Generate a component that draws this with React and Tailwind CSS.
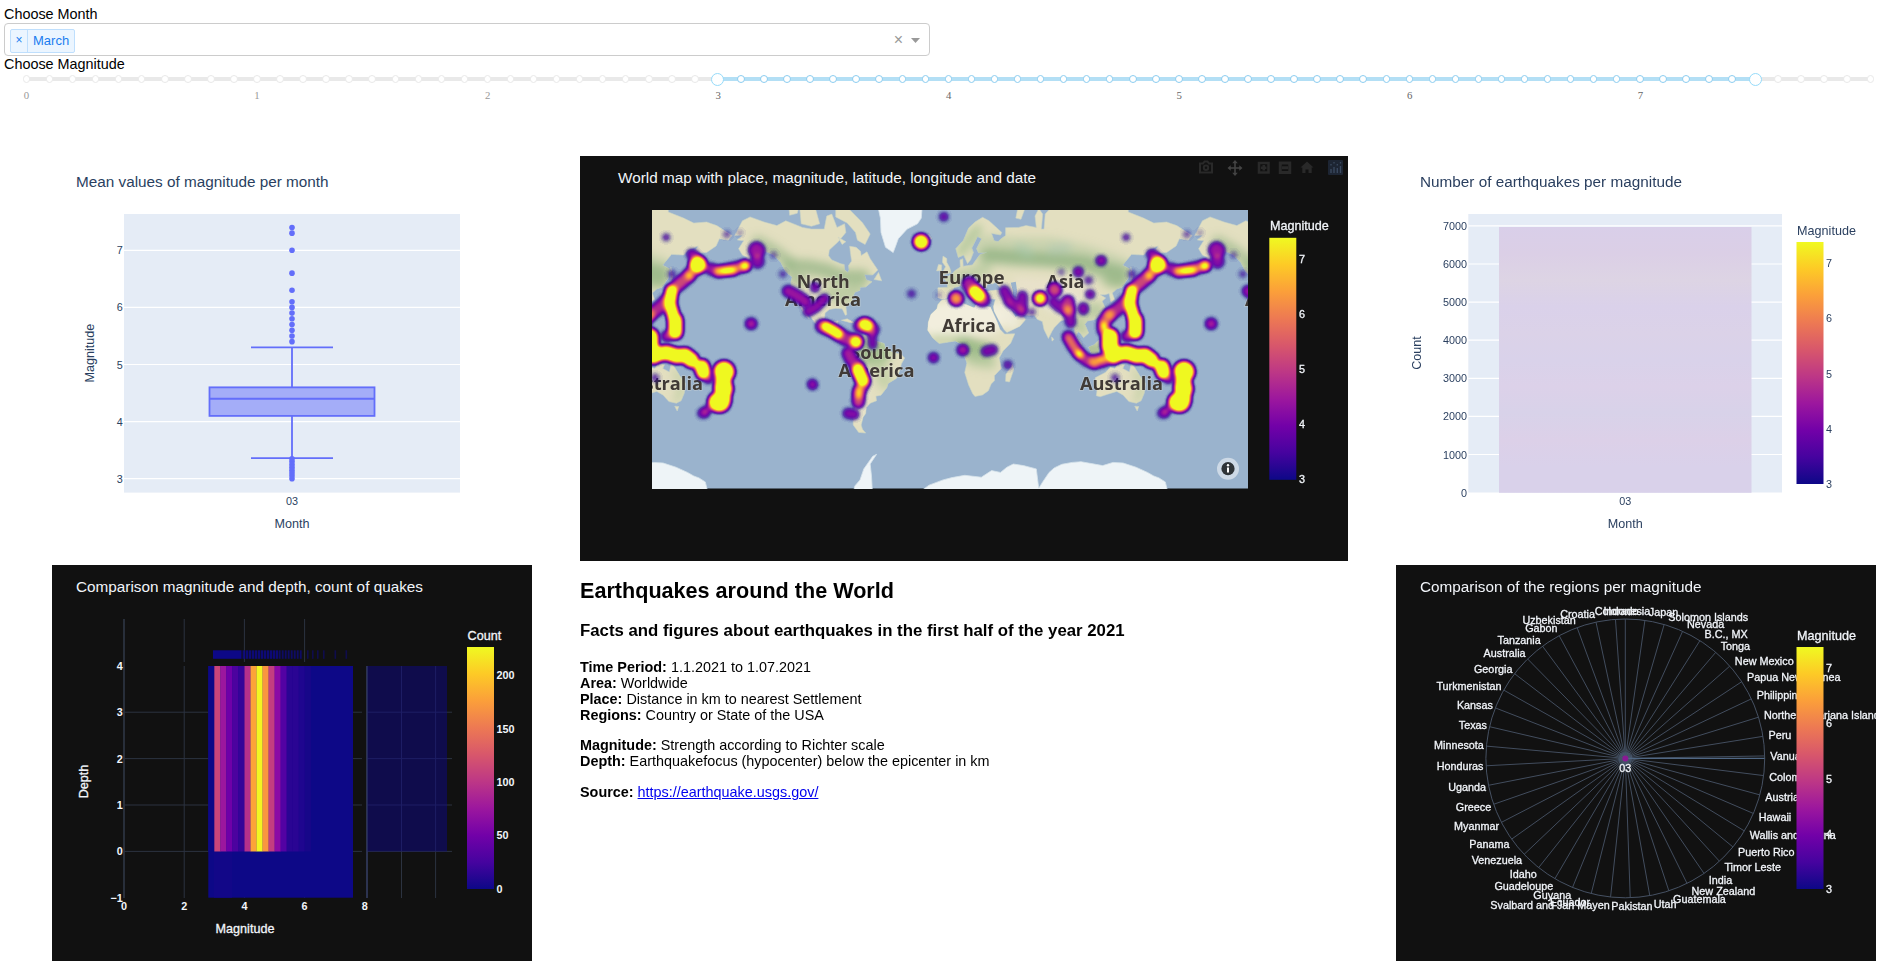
import React from "react";

const FONT = "font-['Liberation_Sans',Arial,sans-serif]";
const PLASMA = ["#0d0887", "#46039f", "#7201a8", "#9c179e", "#bd3786", "#d8576b", "#ed7953", "#fb9f3a", "#fdca26", "#f0f921"];
const LIGHT = "#f2f5fa";

/* ---------- shared chart parts ---------- */

function Label({ x, y, size = 10.8, fill = "#2a3f5f", anchor = "start", weight, rotate, children }) {
  const heavier = fill === LIGHT && !weight && size < 15;
  return (
    <text
      x={x}
      y={y}
      fontSize={size}
      fill={fill}
      stroke={heavier ? fill : "none"}
      strokeWidth={heavier ? 0.3 : 0}
      textAnchor={anchor}
      fontWeight={weight}
      transform={rotate ? `rotate(-90 ${x} ${y})` : undefined}
    >
      {children}
    </text>
  );
}

function ColorBar({ id, x, y, title, ticks, fill, weight }) {
  return (
    <g>
      <defs>
        <linearGradient id={id} x1="0" y1="1" x2="0" y2="0">
          {PLASMA.map((c, i) => (
            <stop key={c} offset={i / 9} stopColor={c} />
          ))}
        </linearGradient>
      </defs>
      <rect x={x} y={y} width="27" height="242" fill={`url(#${id})`} />
      <Label x={x + 0.6} y={y - 7.4} size={12.6} fill={fill}>{title}</Label>
      {ticks.map(([label, ty]) => (
        <Label key={label} x={x + 29.6} y={y + ty + 3.5} fill={fill} weight={weight}>{label}</Label>
      ))}
    </g>
  );
}

const MAG_TICKS = [["7", 21.5], ["6", 76.5], ["5", 132], ["4", 187], ["3", 242]];

/* ---------- header controls ---------- */

function MonthSelect() {
  return (
    <div className="flex h-[33px] w-[926px] items-center rounded-[4px] border border-[#ccc] bg-white pl-[5px] pr-[9px]">
      <div className="mt-[2px] flex h-[24px] items-center rounded-[2px] border border-[#bfdffd] bg-[#ebf5ff] text-[13px] text-[#1a7df0]">
        <span className="flex h-full w-[17px] items-center justify-center border-r border-[#bfdffd] pb-[2px] text-[12px]">×</span>
        <span className="px-[5px]">March</span>
      </div>
      <span className="ml-auto pt-[1px] text-[16px] text-[#999]">×</span>
      <svg className="ml-[8px] mt-[1px]" width="9" height="5" viewBox="0 0 9 5">
        <path d="M0 0h9L4.5 5z" fill="#999" />
      </svg>
    </div>
  );
}

function MagnitudeSlider() {
  const dots = Array.from({ length: 81 }, (_, i) => i);
  return (
    <div className="ml-[22.5px] w-[1844.5px] pt-[1px]">
      <div className="relative flex h-[14px] items-center justify-between">
        <div className="absolute inset-x-0 top-[5px] h-[4px] rounded bg-[#e9e9e9]" />
        <div className="absolute left-[37.5%] top-[5px] h-[4px] w-[56.25%] bg-[#b3dff5]" />
        {dots.map((i) => {
          const on = i >= 30 && i <= 75;
          const handle = i === 30 || i === 75;
          return (
            <span key={i} className="relative flex w-0 justify-center">
              <span
                className={
                  handle
                    ? "size-[13px] shrink-0 rounded-full border-[1.5px] border-[#96dbfa] bg-white"
                    : on
                    ? "size-[7.5px] shrink-0 rounded-full border-[1.5px] border-[#8ccdf0] bg-white"
                    : "size-[7.5px] shrink-0 rounded-full border-[1.5px] border-[#e9e9e9] bg-white"
                }
              />
            </span>
          );
        })}
      </div>
      <div className="flex pt-[2px] font-['Liberation_Serif',serif] text-[10.8px] leading-[14px]">
        {[0, 1, 2, 3, 4, 5, 6, 7].map((n) => (
          <span key={n} className={n > 2 ? "w-[230.56px] text-[#666]" : "w-[230.56px] text-[#999]"}>
            <span className="flex w-0 justify-center">{n}</span>
          </span>
        ))}
      </div>
    </div>
  );
}

/* ---------- box plot ---------- */

function BoxPlot() {
  const y = (v) => 478.7 - (v - 3) * 57.1;
  const high = [7.4, 7.3, 7, 6.6, 6.3, 6.1, 6, 5.9, 5.8, 5.7, 5.6, 5.5, 5.4];
  const low = [3.35, 3.3, 3.25, 3.2, 3.15, 3.1, 3.05, 3];
  return (
    <svg className={`block ${FONT}`} width="480" height="405" viewBox="52 160 480 405">
      <Label x={76} y={187} size={15.3}>Mean values of magnitude per month</Label>
      <rect x="124" y="214" width="336" height="278.6" fill="#e5ecf6" />
      {[3, 4, 5, 6, 7].map((v) => (
        <g key={v}>
          <path d={`M124 ${y(v)}H460`} stroke="#fff" strokeWidth="1.2" />
          <Label x={122.8} y={y(v) + 4} anchor="end">{v}</Label>
        </g>
      ))}
      <g stroke="#636efa" strokeWidth="1.8" fill="none">
        <rect x="209.5" y={y(4.6)} width="165" height={y(4.1) - y(4.6)} fill="#636efa" fillOpacity="0.5" />
        <path d={`M209.5 ${y(4.4)}H374.5M292 ${y(4.6)}V${y(5.3)}M292 ${y(4.1)}V${y(3.36)}M251 ${y(5.3)}H333M251 ${y(3.36)}H333`} />
      </g>
      {[...high, ...low].map((v) => (
        <circle key={v} cx="292" cy={y(v)} r="2.8" fill="#636efa" />
      ))}
      <Label x={292} y={504.6} anchor="middle">03</Label>
      <Label x={292} y={528.2} size={12.6} anchor="middle">Month</Label>
      <Label x={94.5} y={353.2} size={12.6} anchor="middle" rotate>Magnitude</Label>
    </svg>
  );
}

/* ---------- stacked count bar ---------- */

function CountBar() {
  const y = (v) => 492.6 - (v / 1000) * 38.1;
  const stops = ["#d9cfe9", "#dbcfe6", "#ddd4e4", "#dad1ea", "#dbd2e8", "#d9d2ea", "#dcd1e9", "#d8d2e9", "#dcd0e8", "#d9d1ea", "#d9d1ea"];
  return (
    <svg className={`block overflow-visible ${FONT}`} width="480" height="405" viewBox="1396 160 480 405">
      <defs>
        <linearGradient id="stack" x1="0" y1="0" x2="0" y2="1">
          {stops.map((c, i) => (
            <stop key={i} offset={i / (stops.length - 1)} stopColor={c} />
          ))}
        </linearGradient>
      </defs>
      <Label x={1420} y={187} size={15.3}>Number of earthquakes per magnitude</Label>
      <rect x="1468.3" y="214" width="313.7" height="278.5" fill="#e5ecf6" />
      {[0, 1000, 2000, 3000, 4000, 5000, 6000, 7000].map((v) => (
        <g key={v}>
          {v > 0 && <path d={`M1468.3 ${y(v)}H1782`} stroke="#fff" strokeWidth="1.2" />}
          <Label x={1467} y={y(v) + 4} anchor="end">{v}</Label>
        </g>
      ))}
      <rect x="1499" y="227" width="252.5" height="265.8" fill="url(#stack)" />
      <Label x={1625.3} y={504.6} anchor="middle">03</Label>
      <Label x={1625.3} y={528.2} size={12.6} anchor="middle">Month</Label>
      <Label x={1420.5} y={353} size={12.6} anchor="middle" rotate>Count</Label>
      <ColorBar id="bar-scale" x={1796.5} y={242} title="Magnitude" ticks={MAG_TICKS} fill="#2a3f5f" />
    </svg>
  );
}

/* ---------- depth heat map ---------- */

const BINS = [
  "#0d0887", "#ca457a", "#9c179e", "#6f00a8", "#4c029f", "#350498", "#b5308b", "#fca338", "#f2f522", "#f9963f",
  "#c33d80", "#8b0aa5", "#5302a3", "#2a0593", "#2a0593", "#1f068f", "#170789",
];
const RUG = [307, 312, 317, 323, 334.5, 345.5];

function DepthHeatMap() {
  const x = (v) => 124 + v * 30.1;
  const y = (v) => 851.4 - v * 46.4;
  const grid = "#2c3340";
  return (
    <svg className={`block bg-[#111] ${FONT}`} width="480" height="405" viewBox="52 565 480 405">
      <Label x={76} y={591.7} size={15.3} fill={LIGHT}>Comparison magnitude and depth, count of quakes</Label>
      <g stroke={grid} strokeWidth="1">
        {[2, 4, 6].map((v) => (
          <path key={v} d={`M${x(v)} 619V662M${x(v)} 666V898`} />
        ))}
        {[0, 1, 2, 3].map((v) => (
          <path key={v} d={`M124 ${y(v)}H362M367 ${y(v)}H452`} />
        ))}
        <path d="M401.5 666V898M435.6 666V898" />
        <path d="M124 619V898" strokeWidth="1.8" />
        <path d="M367 666V898" strokeWidth="1.8" stroke="#303858" />
      </g>
      <rect x="367.5" y="666" width="79.5" height="185.5" fill="#0d0887" fillOpacity="0.5" />
      <rect x="208.3" y="666" width="144.7" height="231.700" fill="#0d0887" />
      <rect x="214" y="852" width="18" height="45.700" fill="#120788" />
      {BINS.map((c, i) => (
        <rect key={i} x={208.3 + i * 6.03} y="666" width="6.2" height="185.5" fill={c} />
      ))}
      <g fill="#0d0887">
        <rect x="213" y="650.3" width="28.5" height="8.500" />
        {Array.from({ length: 20 }, (_, i) => (
          <rect key={i} x={242.6 + i * 3.01} y="650.3" width={i < 12 ? 2.4 : 1.9} height="8.5" opacity={i < 12 ? 0.85 : 0.7} />
        ))}
        {RUG.map((r) => (
          <rect key={r} x={r} y="650.3" width="1.6" height="8.5" opacity="0.5" />
        ))}
      </g>
      {[-1, 0, 1, 2, 3, 4].map((v) => (
        <Label key={v} x={122.8} y={y(v) + 4} fill={LIGHT} weight={700} anchor="end">{v < 0 ? "−1" : v}</Label>
      ))}
      {[0, 2, 4, 6, 8].map((v) => (
        <Label key={v} x={x(v)} y={909.6} fill={LIGHT} weight={700} anchor="middle">{v}</Label>
      ))}
      <Label x={245} y={933.2} size={12.6} fill={LIGHT} anchor="middle">Magnitude</Label>
      <Label x={87.5} y={781.5} size={12.6} fill={LIGHT} anchor="middle" rotate>Depth</Label>
      <ColorBar
        id="depth-scale"
        x={467}
        y={647}
        title="Count"
        weight={700}
        ticks={[["200", 28], ["150", 82], ["100", 135], ["50", 188.5], ["0", 242]]}
        fill={LIGHT}
      />
    </svg>
  );
}

/* ---------- polar chart ---------- */

const REGIONS = [
  "Indonesia", "Japan", "Solomon Islands", "Nevada", "B.C., MX", "Tonga", "New Mexico", "Papua New Guinea", "Philippines",
  "Northern Mariana Islands", "Peru", "Vanuatu", "Colombia", "Austria", "Hawaii", "Wallis and Futuna", "Puerto Rico",
  "Timor Leste", "India", "New Zealand", "Guatemala", "Utah", "Pakistan", "Svalbard and Jan Mayen", "Ecuador", "Guyana",
  "Guadeloupe", "Idaho", "Venezuela", "Panama", "Myanmar", "Greece", "Uganda", "Honduras", "Minnesota", "Texas", "Kansas",
  "Turkmenistan", "Georgia", "Australia", "Tanzania", "Gabon", "Uzbekistan", "Croatia", "Colorado",
];

function RegionPolar() {
  const cx = 1625.3;
  const cy = 758.4;
  const r = 139.4;
  const middle = ["Indonesia", "Pakistan", "Colorado"];
  return (
    <svg className={`block bg-[#111] ${FONT}`} width="480" height="405" viewBox="1396 565 480 405">
      <Label x={1420} y={591.7} size={15.3} fill={LIGHT}>Comparison of the regions per magnitude</Label>
      <circle cx={cx} cy={cy} r={r} fill="none" stroke="#465163" strokeWidth="1" />
      {REGIONS.map((name, i) => {
        const a = ((90 - i * 8.0899) * Math.PI) / 180;
        const c = Math.cos(a);
        const s = Math.sin(a);
        const mid = middle.includes(name);
        const right = c > 0;
        const lx = mid ? cx + (r + 6) * c + 1.5 : right ? cx + r * c + 3.6 + 2 * c : cx + r * c - 0.6 + 2 * c;
        return (
          <g key={name}>
            <path d={`M${cx} ${cy}L${cx + r * c} ${cy - r * s}`} stroke="#424d5e" strokeWidth="1" />
            <Label x={lx} y={cy - 147.6 * s + 4} fill={LIGHT} anchor={mid ? "middle" : right ? "start" : "end"}>
              {name}
            </Label>
          </g>
        );
      })}
      <path d={`M${cx} ${cy}H${cx + r}`} stroke="#506784" strokeWidth="1.2" />
      <circle cx={cx} cy={cy} r="7" fill="#506784" opacity="0.35" />
      <circle cx={cx} cy={cy} r="3" fill="#8a1a94" />
      <Label x={cx} y={771.8} fill={LIGHT} anchor="middle">03</Label>
      <ColorBar id="polar-scale" x={1796.5} y={647} title="Magnitude" ticks={MAG_TICKS} fill={LIGHT} />
    </svg>
  );
}

/* ---------- world map ---------- */

const px = (lon) => 949.4 + lon * 1.2778;
const py = (lat) => 349 - 73.21 * Math.log(Math.tan(Math.PI / 4 + (lat * Math.PI) / 360));
const line = (pts) => {
  const out = [];
  for (let i = 0; i < pts.length; i += 2) out.push(`${px(pts[i]).toFixed(1)} ${py(pts[i + 1]).toFixed(1)}`);
  return "M" + out.join("L");
};

const LAND = [
  // North America
  [-168, 66, -162, 70.3, -156, 71.3, -145, 70, -135, 69, -128, 70.3, -115, 68.5, -108, 68, -98, 68, -96, 71.5, -92, 72, -88, 68.5, -82, 69.5, -81, 67, -87, 64, -94, 61, -94.5, 58.7, -92, 57, -85, 55.3, -82.3, 55, -82, 52.5, -79.5, 51.3, -78.5, 52.5, -79, 54.5, -76.5, 56.5, -77.5, 60, -78, 62.4, -73, 62, -69.5, 60.5, -69, 58.8, -64.5, 60.3, -62, 57.5, -56, 52.5, -60, 50, -66.5, 50.2, -65, 47.5, -60.5, 46.5, -65.5, 43.6, -70, 43.5, -70, 41.7, -74, 40.5, -76, 37, -75.8, 35.3, -81, 31.5, -80.2, 26, -81.5, 25.5, -82.8, 28, -84, 30, -89.5, 30.2, -94, 29.5, -97.3, 27, -97.8, 22.3, -95, 18.7, -91, 18.8, -90.3, 21, -87, 21.4, -88.3, 16, -84, 15.8, -83.5, 11, -80, 9.2, -77.4, 8.5, -80, 7.4, -83.5, 8.6, -87.5, 13, -94, 16, -101, 17.5, -105.5, 20.3, -109.3, 25.6, -112.8, 30.5, -114.7, 31.3, -112, 27.5, -109.7, 23, -112.2, 25, -115, 28.5, -117.2, 32.8, -120.6, 34.7, -124, 39.5, -124, 46.5, -123, 49, -128, 51.5, -132, 56, -138, 59.2, -146, 60.8, -152, 59.8, -156, 57.5, -164, 54.8, -158, 58, -162, 59, -165, 61.5, -161, 64.3, -166, 64.6, -162, 66],
  [-89, 74, -78, 73, -68, 69.8, -62, 66.5, -66, 63, -72, 64.5, -73.5, 67, -80, 69.7, -89, 71.3],
  [-117, 73, -105, 73.5, -101.5, 69.5, -108, 68.8, -116, 69.5],
  [-126, 74.5, -125, 71.7, -119, 72.2, -117, 74.5],
  [-87, 65.5, -81, 64, -84, 63],
  [-59, 47.7, -53, 47, -55.5, 51.3],
  [-84.5, 22, -77, 20, -74.5, 20.2, -80, 23],
  [-74, 18.4, -68.5, 18.4, -70, 19.8, -73, 19.8],
  // Iceland
  [-24, 65.5, -22, 64, -18.5, 63.4, -13.8, 65, -16, 66.4, -21, 66],
  // South America
  [-77.4, 8.5, -75, 11, -71.7, 12.3, -71, 11, -64, 10.5, -61, 9, -57, 6, -51, 4.3, -50, 0, -44.5, -2.5, -38, -4, -35, -7, -37.5, -11.5, -39, -17, -41.5, -22.5, -48, -26, -49, -29, -53.5, -34, -57.5, -34.6, -57, -37.5, -62, -39, -65, -41.5, -65.5, -45, -67.5, -47, -69, -51, -68, -53, -65.5, -54.8, -71, -54.5, -75.3, -51, -75.3, -46.5, -73.5, -41, -73.5, -37, -71.5, -31, -70.3, -22, -70.5, -18.3, -76, -14, -79, -8, -81.2, -5, -80, -2.5, -80, 1, -77.3, 4],
  // Africa
  [-6, 35.8, 3, 36.9, 10.5, 37.3, 11, 33.6, 19.5, 30.5, 21, 32.8, 32, 31.2, 34, 27.5, 37.3, 20.8, 39.5, 15.2, 43.2, 11.6, 51.2, 11.8, 48, 4.5, 42, -1.5, 39, -7, 40.6, -15, 35.2, -20.5, 35.4, -24, 32.7, -26.5, 30.5, -31, 26, -33.8, 20, -34.8, 18.2, -33, 15, -27, 12, -18, 13.7, -11, 12, -5.5, 9, -1, 9.5, 4, 4.5, 6.3, -3, 5, -8, 4.3, -13, 8.5, -17, 14.5, -16.5, 20.5, -14.5, 26, -9.8, 30, -9, 32.8],
  [49.3, -12, 50.3, -16, 47, -25, 44, -24.5, 44.2, -19.5],
  // Europe and Asia
  [-9, 43.2, -1.5, 43.4, -1.3, 46, -4.7, 48.4, 1.5, 50, 4, 52, 8.5, 53.8, 8.3, 57, 10.5, 57.5, 10.8, 54.2, 18, 54.8, 21.5, 57.5, 24, 59.3, 29.8, 60, 22.8, 59.9, 21.3, 61.5, 25.3, 65, 22, 65.7, 17.5, 61.8, 18.8, 60, 16.5, 57, 14.2, 55.4, 11.2, 59, 7, 58, 5, 61.5, 11, 64.5, 15, 68.3, 20, 70, 26, 71.2, 31, 70.3, 41, 67, 40, 66.2, 33, 66.7, 35, 64.3, 38, 64, 40.5, 65, 44, 66, 44, 68.4, 54, 68.5, 60, 69, 68, 68.5, 67, 71.5, 70, 73.3, 73, 72, 72, 68, 74, 68, 75, 72, 80, 73.7, 140, 73.7, 140, 72.5, 152, 71, 160, 69.7, 170, 70, 178, 69, 190, 66, 187, 64.5, 180, 65, 177.5, 62.5, 170, 60, 163.5, 59.8, 162.5, 56.2, 156.7, 51, 155.8, 56.5, 163.5, 62.5, 156, 61, 152, 59, 142.5, 59.3, 135.5, 54.7, 141, 53, 140, 48.5, 135, 43.5, 131, 42.5, 127.5, 40, 129.4, 36, 126.4, 34.5, 125, 39.7, 121.5, 39, 118, 39, 122.3, 37, 119.5, 35, 121.8, 31, 119, 25.5, 113.5, 22.3, 108, 21.5, 106, 19, 109, 12.5, 105, 8.8, 102.5, 12.3, 100.5, 13.5, 99.3, 10, 103.3, 4.5, 104, 1.3, 100.7, 4, 98.5, 8.5, 97.5, 16.5, 94.5, 16, 91.8, 22.5, 87, 21.3, 82.2, 16.7, 80.2, 13.5, 77.5, 8.2, 74, 15, 72.7, 21, 69, 22.5, 66.5, 25.3, 57.3, 25.8, 51.5, 27.9, 48, 30, 50.5, 26, 51.7, 24.2, 56.2, 26.2, 59.7, 22.5, 55.2, 17.5, 45, 12.8, 42.7, 15, 39, 21.5, 35, 28.5, 34.5, 31.5, 36, 36.2, 30.7, 36.5, 27, 37.3, 26.3, 40, 30, 41.2, 36, 41.8, 41.5, 41.7, 37.5, 45, 39, 47.2, 33.5, 45.2, 30.5, 46.3, 28, 42.5, 28.5, 41.2, 23, 40.5, 24, 38, 22.5, 36.5, 19.5, 41, 13.8, 45.5, 12.5, 44, 18.3, 40, 16, 38.2, 12, 41.7, 9, 44.3, 3.2, 43, 3, 41.8, -0.5, 38.5, -2, 36.8, -5.6, 36.2, -9, 37.2],
  [-5.5, 50, 1.3, 51.2, 0.3, 53.5, -2, 56, -2, 57.6, -5, 58.6, -5.5, 56, -3, 54, -4.8, 52],
  [-10, 52, -6.2, 52.2, -6, 54.8, -8.5, 55],
  [52, 71, 56, 70.7, 60, 74, 54, 74],
  [142, 54, 143.5, 49, 142.2, 46, 142, 50],
  [140.2, 42, 143, 42, 145.3, 43.5, 141.7, 45.4],
  [130, 33.7, 130.5, 31.3, 132, 33.5, 135.5, 33.6, 139.5, 35, 140.9, 36, 141.8, 39.5, 141, 41.3, 139.5, 38.5, 136.5, 37, 132.5, 35.4],
  [120.3, 23, 121.5, 25],
  [120.3, 18.3, 122.2, 18.3, 121.7, 14.5, 125.5, 12, 126.3, 7.3, 123, 7.5, 124, 10.8, 120.5, 14],
  [109, 1.5, 113, 3.2, 117, 7, 119, 5, 117.5, 1, 116, -3.8, 111, -3.3],
  [95.5, 5.5, 98, 4, 103.5, -1, 106, -3, 105.5, -5.8, 102, -4, 98.5, 1],
  [105.5, -6.5, 108.5, -6.7, 114.4, -7.8, 114.3, -8.7, 106.5, -7.4],
  [119.5, 0.5, 125, 1.5, 121, -1, 123, -4.8, 120.5, -5.5, 119, -3],
  [131, -0.8, 134, -1, 138, -1.7, 144.5, -3.8, 148, -6.5, 150.7, -10.5, 144, -7.7, 138, -8.3, 138, -5.5, 133, -4],
  [80, 9.5, 81.8, 7.5, 80.3, 6.1],
  // Oceania
  [114, -22, 122, -18, 126, -14, 129.5, -15, 132, -11.3, 137, -12.2, 135.7, -15, 140.8, -17.6, 142.5, -10.8, 145.5, -15, 149, -20.5, 153.3, -26, 152.5, -32.5, 150, -37.5, 146.3, -39, 140.5, -38, 136, -34, 131, -31.5, 124, -33.3, 118, -35, 115, -34.3, 115.5, -31],
  [145, -40.8, 148.2, -41, 147, -43.6],
];
const ICE = [
  [-57, 75, -54, 71, -53.5, 67, -50, 62, -44, 60, -42, 62.5, -40, 65, -33, 68, -25, 69.5, -22, 71, -21, 75],
  [-76, -75, -74, -72.5, -70, -71, -67, -68, -60, -64, -57, -63.3, -62, -66.5, -61, -70, -60, -75],
  [-29, -75, -16, -72.3, -5, -71, 2, -70.4, 12, -69.8, 25, -70.3, 33, -68.5, 40, -69, 45, -67.5, 50, -66.5, 58, -67, 68, -68, 69.5, -72, 70, -73, 73, -71.5, 78, -69, 82, -67.7, 88, -66.6, 96, -66, 103, -65.8, 110, -66.3, 120, -67, 128, -66, 136, -66.2, 146, -67.5, 155, -69, 160, -70, 164, -70.5, 169, -71.5, 172, -75],
];
const LAND_PATH = LAND.map((p) => line(p) + "Z").join("");
const ICE_PATH = ICE.map((p) => line(p) + "Z").join("");

// [points, width, colour, opacity]
const TERRAIN = [
  [[-150, 64, -138, 61, -125, 56], 12, "#9cb98c", 0.7],
  [[-125, 54, -112, 54, -95, 52, -85, 49, -68, 49], 15, "#97b587", 0.75],
  [[-122, 48, -115, 46], 9, "#92b082", 0.7],
  [[-92, 40, -80, 38, -72, 44], 16, "#a9c294", 0.65],
  [[-112, 35, -103, 33], 16, "#e6e1c9", 0.8],
  [[-90, 15, -84, 11], 6, "#a9c294", 0.8],
  [[-74, 3, -64, -3, -56, -3], 26, "#9abb87", 0.85],
  [[-55, -15, -50, -25], 16, "#bccd9f", 0.7],
  [[-70, -20, -67, -32, -69, -48], 6, "#ece8d8", 0.8],
  [[9, 60, 14, 64, 22, 68], 9, "#a5c292", 0.75],
  [[0, 47, 15, 50, 28, 53], 14, "#b5ca9d", 0.75],
  [[30, 61, 55, 60, 80, 60, 105, 57, 122, 54, 135, 51], 30, "#b4c9a0", 0.55],
  [[30, 59, 55, 58, 80, 57, 105, 56, 122, 53, 135, 51], 14, "#8db180", 0.75],
  [[55, 62, 62, 60], 10, "#a9c9ae", 0.6],
  [[80, 61, 92, 62], 9, "#b3cbb2", 0.7],
  [[125, 47, 134, 46], 12, "#9bb98a", 0.8],
  [[55, 45, 70, 44, 85, 44, 105, 44], 14, "#e9e2cb", 0.95],
  [[80, 35, 98, 33], 16, "#ece9de", 0.95],
  [[105, 28, 116, 29], 16, "#b3c79c", 0.8],
  [[98, 20, 105, 15], 10, "#a9c294", 0.8],
  [[45, 24, 50, 20, 42, 30, 56, 32], 14, "#f0ecdc", 0.9],
  [[-10, 22, 10, 24, 30, 24], 34, "#f2eedd", 1],
  [[-12, 8, 5, 8, 15, 7], 8, "#bccd9f", 0.8],
  [[12, 2, 20, -1, 27, -2], 20, "#97b884", 0.9],
  [[18, -9, 32, -11], 12, "#b5c99d", 0.8],
  [[101, 0, 114, 0, 122, -1, 140, -5], 12, "#98b587", 0.8],
  [[146, -18, 151, -28, 147, -37], 6, "#b9ca9f", 0.8],
];

// [path points on the canvas, stroke width, intensity]
const QUAKES = [
  // Pacific rim, north to south
  [[630, 206, 655, 215, 735, 197], 10, 0.22],
  [[655, 214, 698, 211], 8, 0.5],
  [[672, 213, 688, 212], 5, 0.6],
  [[735, 197, 736, 197], 9, 0.62],
  [[700, 210, 735, 198], 8, 0.25],
  [[770, 150, 771, 152], 15, 0.22],
  [[772, 182, 773, 185], 12, 0.18],
  [[575, 163, 585, 168], 9, 0.2],
  [[593, 193, 594, 194], 15, 1],
  [[590, 200, 566, 228, 530, 258], 11, 0.34],
  [[567, 226, 568, 227], 7, 0.45],
  [[515, 272, 509, 310, 518, 340, 526, 370], 10, 1],
  [[526, 360, 526, 396], 12, 1],
  [[500, 408, 512, 405], 9, 0.25],
  [[500, 300, 480, 322, 448, 345], 11, 0.27],
  [[448, 345, 432, 365, 432, 390], 11, 0.33],
  [[432, 373, 432, 383], 6, 0.6],
  [[450, 410, 450, 440, 462, 466], 14.5, 1],
  [[462, 464, 500, 458, 530, 468, 556, 466, 574, 480], 12.5, 1],
  [[574, 484, 604, 506], 8, 0.45],
  [[606, 500, 610, 516], 12, 1],
  [[610, 520, 625, 535], 8, 0.25],
  [[672, 514, 673, 515], 18.5, 1],
  [[670, 520, 668, 600], 14, 1],
  [[670, 562, 671, 568], 16, 1],
  [[655, 606, 660, 606], 18, 1],
  [[607, 640, 613, 640], 9, 0.14],
  [[630, 622, 615, 635], 7, 0.18],
  // Sumatra and Java
  [[325, 410, 340, 438, 358, 462, 380, 480, 402, 488], 10, 0.27],
  [[325, 415, 350, 452], 7, 0.22],
  [[356, 460, 361, 465], 6, 0.7],
  [[402, 486, 425, 482, 455, 470], 11, 0.33],
  [[420, 478, 430, 478], 6, 0.4],
  // Asia
  [[240, 295, 241, 295], 11, 0.8],
  [[283, 268, 284, 270], 12, 0.34],
  [[280, 305, 300, 322, 320, 330], 9, 0.17],
  [[323, 305, 326, 330], 11, 0.28],
  [[326, 330, 332, 368], 9, 0.18],
  [[355, 215, 355, 216], 9, 0.18],
  [[423, 182, 424, 182], 9, 0.2],
  [[385, 241, 386, 241], 8, 0.09],
  [[390, 283, 391, 283], 8, 0.16],
  [[370, 323, 370, 329], 9, 0.18],
  [[303, 216, 304, 216], 6, 0.07],
  [[498, 112, 499, 112], 7, 0.1],
  [[516, 222, 516, 222.5], 8, 0.08],
  [[680, 103, 681, 103], 7, 0.07],
  [[720, 98, 720, 98.5], 6, 0.04],
  [[820, 165, 821, 165], 7, 0.06],
  [[465, 533, 466, 534], 8, 0.08],
  [[133, 272, 150, 305, 185, 335], 9, 0.18],
  [[147, 304, 150, 308], 8, 0.08],
  [[187, 288, 186, 325], 9, 0.17],
  [[215, 336, 216, 336], 7, 0.08],
  // Mediterranean
  [[28, 252, 42, 272, 68, 298], 13, 0.25],
  [[45, 275, 57, 287], 11, 1],
  [[-12, 295, -11, 296], 12, 0.5],
  // Africa and the oceans
  [[8, 450, 9, 450], 10, 0.23],
  [[78, 454, 98, 449], 9, 0.16],
  [[143, 494, 144, 494], 8, 0.12],
  [[753, 371, 754, 371], 10, 0.24],
  [[-80, 473, -79, 473], 9, 0.19],
  [[-49, 50, -48, 50], 8, 0.14],
  [[-146, 281, -145, 281], 8, 0.09],
  [[-65, 285, -64, 285], 7, 0.03],
  [[-443, 553, -442, 554], 9, 0.2],
  [[-117, 125, -116, 126], 13, 1],
  // Americas
  [[-516, 273, -485, 290, -463, 305], 10, 0.22],
  [[-456, 335, -432, 322, -407, 296], 8, 0.2],
  [[-435, 260, -435, 263], 8, 0.16],
  [[-532, 222, -531, 222], 7, 0.08],
  [[-413, 378, -380, 392, -345, 415, -312, 425], 12, 0.26],
  [[-403, 379, -380, 392, -365, 402], 8, 0.95],
  [[-312, 425, -312, 426], 11, 0.85],
  [[-287, 373, -278, 377], 11, 0.85],
  [[-300, 378, -280, 375, -262, 388], 12, 0.18],
  [[-264, 400, -262, 435], 7, 0.16],
  [[-335, 460, -325, 480, -306, 500], 11, 0.24],
  [[-306, 509, -292, 540], 11, 0.95],
  [[-287, 545, -303, 575, -305, 606], 10, 0.34],
  [[-303, 570, -304, 585], 7, 0.45],
  [[-336, 640, -318, 643], 9, 0.18],
];
const quakePath = (pts) => {
  const out = [];
  for (let i = 0; i < pts.length; i += 2) out.push(`${960 + pts[i] / 3} ${200 + pts[i + 1] / 3}`);
  return "M" + out.join("L");
};
const table = (from) => PLASMA.map((c) => (parseInt(c.slice(from, from + 2), 16) / 255).toFixed(3)).join(" ");

const PLACES = [
  [823.2, 287.5, "North", 53],
  [823, 306.3, "America", 76],
  [876.8, 358.5, "South", 53],
  [876.5, 377.2, "America", 76],
  [971.5, 284, "Europe", 66],
  [969, 332.3, "Africa", 54],
  [1065.5, 288, "Asia", 38],
  [1121.5, 390.2, "Australia", 83],
];

function ModeBar() {
  return (
    <g fill="none" stroke="#292929" strokeWidth="2">
      <g>
        <path d="M1200 163.500h3l1.500-2h3l1.500 2h3v9h-12z" />
        <circle cx="1206" cy="167.800" r="2.200" />
      </g>
      <g stroke="#444" strokeWidth="1.600">
        <path d="M1235 162v12M1229 168h12" />
        <path d="M1235 160l2.800 3.200h-5.600zM1235 176l2.800-3.200h-5.600zM1227.500 168l3.200-2.800v5.600zM1242.500 168l-3.200-2.800v5.600z" fill="#444" stroke="none" />
      </g>
      <path d="M1259 163h9.500v9.500h-9.500zM1263.750 165v5.500M1261 167.750h5.500" strokeWidth="2.600" />
      <path d="M1280.250 163h9.500v9.500h-9.500zM1282 167.750h6" strokeWidth="3" />
      <path d="M1307 161.500l6.500 6h-1.800v5.500h-3.200v-3.500h-3v3.500h-3.200v-5.500h-1.800z" fill="#292929" stroke="none" />
      <rect x="1328" y="160" width="15" height="15" rx="1" fill="#1d2533" stroke="none" />
      <path d="M1331 173v-4M1334 173v-6M1337.300 173v-5M1340.500 173v-7M1331 164v1.500M1334 162v1.500M1337.300 164v1.500M1340.500 162v1.500" stroke="#3b4a60" strokeWidth="1.300" />
    </g>
  );
}

function WorldMap() {
  return (
    <svg className={`block bg-[#111] ${FONT}`} width="768" height="405" viewBox="580 156 768 405">
      <defs>
        <clipPath id="frame">
          <rect x="652" y="210" width="596" height="278.5" />
        </clipPath>
        <clipPath id="land">
          <path d={LAND_PATH} />
        </clipPath>
        <filter id="soft">
          <feGaussianBlur stdDeviation="0.7" />
        </filter>
        <filter id="softer" x="-20%" y="-20%" width="140%" height="140%">
          <feGaussianBlur stdDeviation="4" />
        </filter>
        <filter id="density" filterUnits="userSpaceOnUse" x="630" y="190" width="640" height="320" colorInterpolationFilters="sRGB">
          <feGaussianBlur stdDeviation="2" />
          <feColorMatrix values="0 0 0 1.5 0  0 0 0 1.5 0  0 0 0 1.5 0  0 0 0 1.5 0" />
          <feComponentTransfer>
            <feFuncR type="table" tableValues={table(1)} />
            <feFuncG type="table" tableValues={table(3)} />
            <feFuncB type="table" tableValues={table(5)} />
            <feFuncA type="table" tableValues="0 0.7 0.95 1 1 1 1 1 1 1 1" />
          </feComponentTransfer>
        </filter>
        <g id="world">
          <g filter="url(#soft)">
            <path d={LAND_PATH} fill="#e3dfc0" stroke="#c9d3c4" strokeWidth="0.6" />
            <g clipPath="url(#land)">
              <g filter="url(#softer)" fill="none" strokeLinecap="round" strokeLinejoin="round">
                {TERRAIN.map(([pts, w, c, o], i) => (
                  <path key={i} d={line(pts)} stroke={c} strokeWidth={w} opacity={o} />
                ))}
              </g>
            </g>
            <path d={ICE_PATH} fill="#eef4f7" stroke="#d5e2ea" strokeWidth="0.8" />
            <path d={line([48, 46, 52, 46.5, 53, 41, 52, 37, 50, 38, 49.5, 42]) + "Z"} fill="#9ab3cd" />
          </g>
        </g>
        <g id="places" fontSize="18.5" fontWeight="700" textAnchor="middle" fill="#403a35" stroke="#e8e6dc" strokeOpacity="0.35" strokeWidth="1.500" style={{ paintOrder: "stroke" }}>
          {PLACES.map(([x, y, t, w]) => (
            <text key={`${t}${x}`} x={x} y={y} textLength={w} lengthAdjust="spacingAndGlyphs">{t}</text>
          ))}
        </g>
        <g id="quakes" fill="none" stroke="#fff" strokeLinecap="round" strokeLinejoin="round">
          {QUAKES.map(([pts, w, v], i) => (
            <path key={i} d={quakePath(pts)} strokeWidth={w} opacity={v} />
          ))}
        </g>
      </defs>
      <Label x={618} y={182.7} size={15.3} fill={LIGHT}>World map with place, magnitude, latitude, longitude and date</Label>
      <ModeBar />
      <g clipPath="url(#frame)">
        <rect x="652" y="210" width="596" height="279" fill="#9ab3cd" />
        <use href="#world" x="-460" />
        <use href="#world" />
        <use href="#world" x="460" />
        <g className="font-['Open_Sans',sans-serif]">
          <use href="#places" x="-460" />
          <use href="#places" />
          <use href="#places" x="460" />
        </g>
        <g filter="url(#density)">
          <use href="#quakes" x="-460" />
          <use href="#quakes" />
          <use href="#quakes" x="460" />
        </g>
        <circle cx="1228" cy="468.700" r="11" fill="#fff" fillOpacity="0.5" />
        <circle cx="1228" cy="468.700" r="6.600" fill="#2f3438" />
        <path d="M1228 467.500v5" stroke="#fff" strokeWidth="2" fill="none" />
        <circle cx="1228" cy="465.200" r="1.200" fill="#fff" />
      </g>
      <ColorBar id="map-scale" x={1269.3} y={237.8} title="Magnitude" ticks={MAG_TICKS} fill={LIGHT} />
    </svg>
  );
}

/* ---------- facts ---------- */

function Fact({ name, children }) {
  return (
    <p>
      <b>{name}:</b> {children}
    </p>
  );
}

function Facts() {
  return (
    <div className="text-[14.4px] leading-[16px] text-black">
      <h2 className="pt-[17px] text-[21.6px] font-bold leading-[25px]">Earthquakes around the World</h2>
      <h3 className="pb-[18px] pt-[18px] text-[16.8px] font-bold leading-[20px]">
        Facts and figures about earthquakes in the first half of the year 2021
      </h3>
      <Fact name="Time Period">1.1.2021 to 1.07.2021</Fact>
      <Fact name="Area">Worldwide</Fact>
      <Fact name="Place">Distance in km to nearest Settlement</Fact>
      <Fact name="Regions">Country or State of the USA</Fact>
      <div className="pt-[14px]">
        <Fact name="Magnitude">Strength according to Richter scale</Fact>
        <Fact name="Depth">Earthquakefocus (hypocenter) below the epicenter in km</Fact>
      </div>
      <div className="pt-[15px]">
        <Fact name="Source">
          <a className="text-[#0000ee] underline" href="https://earthquake.usgs.gov/">https://earthquake.usgs.gov/</a>
        </Fact>
      </div>
    </div>
  );
}

export default function App() {
  return (
    <div className="h-[961px] w-[1885px] overflow-hidden bg-white font-['Liberation_Sans',Arial,sans-serif] text-black">
      <header className="flex h-[156px] flex-col pl-[4px] pt-[6px] text-[14.4px]">
        <div className="h-[17px] leading-[17px]">Choose Month</div>
        <MonthSelect />
        <div className="h-[15px] leading-[17px]">Choose Magnitude</div>
        <MagnitudeSlider />
      </header>
      <main className="flex gap-[48px] pl-[52px]">
        <div className="flex w-[480px] flex-col pt-[4px]">
          <BoxPlot />
          <DepthHeatMap />
        </div>
        <div className="flex w-[768px] flex-col">
          <WorldMap />
          <Facts />
        </div>
        <div className="flex w-[480px] flex-col pt-[4px]">
          <CountBar />
          <RegionPolar />
        </div>
      </main>
    </div>
  );
}
